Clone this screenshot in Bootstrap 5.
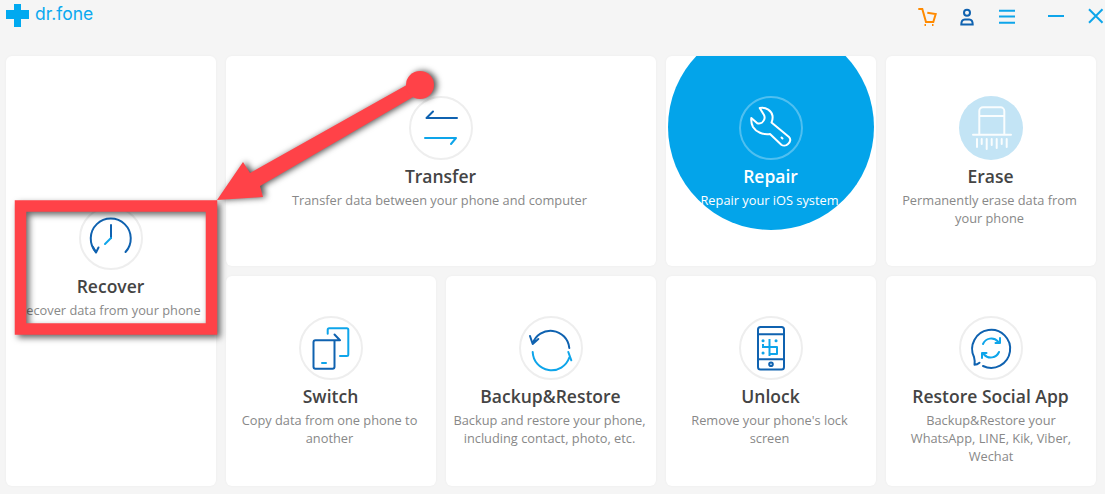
<!DOCTYPE html>
<html lang="en">
<head>
    <meta charset="UTF-8">
    <meta name="viewport" content="width=device-width, initial-scale=1.0">
    <title>dr.fone</title>
    <link href="https://cdn.jsdelivr.net/npm/bootstrap@5.3.3/dist/css/bootstrap.min.css" rel="stylesheet">
    <style>
        body {
            background: #f5f5f5;
            font-family: "Open Sans", "Noto Sans", sans-serif;
            height: 494px;
            overflow: hidden;
            position: relative;
        }
        .top-bar { height: 56px; padding: 8px 1px 0 6px; }
        .top-bar svg { overflow: visible; fill: none; stroke-width: 2; }
        .brand-wrap { margin-top: -4px; }
        .logo-text {
            font-family: Inter, sans-serif;
            font-size: 17.5px;
            line-height: 23px;
            color: #0aa9f0;
            margin: -4px 0 0 6px;
        }
        .win-tools { gap: 24px; }
        .win-min { margin-left: 9px; }
        .tool-grid {
            display: grid;
            grid-template-columns: repeat(5, 210px);
            grid-template-rows: repeat(2, 210px);
            gap: 10px;
            padding-left: 6px;
        }
        .tool-card {
            border-radius: 6px;
            box-shadow: 0 0 3px rgba(0, 0, 0, .04);
            padding: 40px 6px 0;
            overflow: hidden;
            align-items: center;
        }
        .tool-recover { grid-row: span 2; padding-top: 150px; }
        .tool-wide { grid-column: span 2; }
        .tool-active { color: #fff; }
        .tool-active > * { position: relative; }
        .tool-active::before {
            content: "";
            position: absolute;
            left: 2px;
            top: -32px;
            width: 206px;
            height: 206px;
            border-radius: 50%;
            background: #03a4ea;
        }
        .tool-icon {
            width: 64px;
            height: 64px;
            fill: none;
            stroke-width: 2;
            stroke-linecap: round;
            stroke-linejoin: round;
        }
        .tool-name {
            font-family: "Open Sans", sans-serif;
            font-size: 17.5px;
            font-weight: 600;
            line-height: 24px;
            color: #444;
            margin: 4px 1px 3px 0;
        }
        .tool-desc {
            font-size: 12.8px;
            line-height: 18px;
            color: #888;
            margin: 0;
            padding-right: 3px;
        }
        .desc-narrow { max-width: 170px; padding-right: 0; }
        .tool-active .tool-name, .tool-active .tool-desc { color: #fff; }
        .ring { stroke: #eeeeee; }
        .dk { stroke: #0f62b0; }
        .lt { stroke: #0ea5ea; }
        .mark-layer {
            position: absolute;
            left: 0;
            top: 0;
            pointer-events: none;
        }
        .box-shadow { filter: drop-shadow(3px 3px 3px rgba(0, 0, 0, .6)); }
        .arrow-shadow { filter: drop-shadow(3px 0 3px rgba(0, 0, 0, .7)); }
    </style>
</head>
<body>
    <div class="top-bar d-flex align-items-start justify-content-between">
        <div class="brand-wrap d-flex align-items-center">
            <svg width="23" height="23" viewBox="0 0 23 23"><path d="M8 0h7v6h8v9h-8v8H8v-8H0V6h8z" fill="#00a9f0" stroke="none"/></svg>
            <span class="logo-text">dr.fone</span>
        </div>
        <div class="win-tools d-flex">
            <svg width="16" height="16" viewBox="0 0 16 16"><path d="M-.7 1h4L7 14h7.300l2.400-8-8.400-1.300" stroke="#ff8a00"/><path d="M5.500 17h1.500M13 17h1.500" stroke="#ff8a00"/></svg>
            <svg width="16" height="16" viewBox="0 0 16 16"><circle cx="8" cy="4.700" r="3" stroke="#0f62b0"/><path d="M2.300 16.500c0-3 1.500-5 3.500-5h4.400c2 0 3.500 2 3.500 5z" stroke="#0f62b0"/></svg>
            <svg width="16" height="16" viewBox="0 0 16 16"><path d="M0 2.700h16M0 8.500h16M0 14.700h16" stroke="#0ea5ea"/></svg>
            <svg class="win-min" width="16" height="16" viewBox="0 0 16 16"><path d="M0 8h16" stroke="#0ea5ea"/></svg>
            <svg width="16" height="16" viewBox="0 0 16 16"><path d="M1 1.300l13.500 13.500M14.500 1.300L1 14.800" stroke="#0ea5ea"/></svg>
        </div>
    </div>

    <div class="tool-grid">
        <div class="card border-0 text-center tool-card tool-recover">
            <svg class="tool-icon" viewBox="0 0 64 64">
                <circle class="ring" cx="32" cy="32" r="31"/>
                <path class="dk" d="M17 46A20 20 0 1 1 46.500 46"/>
                <path class="dk" d="M14 41l3 5.500 2.500-5"/>
                <path class="dk" d="M32 19v13"/>
                <path class="lt" d="M32 32l-6 6"/>
            </svg>
            <div class="tool-name">Recover</div>
            <p class="tool-desc">Recover data from your phone</p>
        </div>
        <div class="card border-0 text-center tool-card tool-wide">
            <svg class="tool-icon" viewBox="0 0 64 64">
                <circle class="ring" cx="32" cy="32" r="31"/>
                <path class="dk" d="M48 22H17.500L24 15.500"/>
                <path class="lt" d="M16 42h31l-5 6"/>
            </svg>
            <div class="tool-name">Transfer</div>
            <p class="tool-desc">Transfer data between your phone and computer</p>
        </div>
        <div class="card border-0 text-center tool-card tool-active">
            <svg class="tool-icon" viewBox="0 0 64 64">
                <circle cx="32" cy="32" r="31" stroke="#fff" stroke-opacity=".3"/>
                <path stroke="#fff" d="M20.700 12C27 10.500 33 15 33.500 20 34 23 33 25 32.500 26.500L50 41C52 43 51.500 46 49 48 47 50 44 50 42.300 48.700L31 38C24 39 17 36 14 31 12.500 28 12 25 12.300 22L18.300 27.300C21 28 24 26.500 25 24 26 22 25.500 20 25 19Z"/>
                <path stroke="#fff" d="M42.500 41.500l1 1"/>
            </svg>
            <div class="tool-name">Repair</div>
            <p class="tool-desc">Repair your iOS system</p>
        </div>
        <div class="card border-0 text-center tool-card">
            <svg class="tool-icon" viewBox="0 0 64 64">
                <circle cx="32" cy="32" r="32" fill="#c3e4f5"/>
                <path stroke="#fff" stroke-opacity=".9" d="M20.300 38V15c0-2 1.500-3.700 3.700-3.700h17.500c2 0 3.800 1.700 3.800 3.700v23M20.300 20h25M14 38.700h38M18 43v8M22.700 43v5M27.700 43v10M32.700 43v6M37.700 43v9M42.700 43v5M47.700 43v8"/>
            </svg>
            <div class="tool-name">Erase</div>
            <p class="tool-desc">Permanently erase data from your phone</p>
        </div>
        <div class="card border-0 text-center tool-card">
            <svg class="tool-icon" viewBox="0 0 64 64">
                <circle class="ring" cx="32" cy="32" r="31"/>
                <path class="lt" d="M28.700 17.700v-4a1.500 1.500 0 0 1 1.500-1.500h17.600a1.500 1.500 0 0 1 1.500 1.500v24.800a1.500 1.500 0 0 1-1.500 1.500H41"/>
                <path class="dk" d="M41 24.300H16.500a2 2 0 0 0-2 2v24.500a2 2 0 0 0 2 2h17a2 2 0 0 0 2-2V24.500M35.500 18.500l5.500 5.800"/>
                <path class="lt" d="M23 47h4"/>
            </svg>
            <div class="tool-name">Switch</div>
            <p class="tool-desc">Copy data from one phone to another</p>
        </div>
        <div class="card border-0 text-center tool-card">
            <svg class="tool-icon" viewBox="0 0 64 64">
                <circle class="ring" cx="32" cy="32" r="31"/>
                <path class="dk" d="M13.700 27.700A18.800 18.800 0 0 1 50.300 32M11 20l2.700 8 5.600-5"/>
                <path class="lt" d="M13.700 36A18.800 18.800 0 0 0 50.300 41.500M49.300 36l3 8.300"/>
            </svg>
            <div class="tool-name">Backup&amp;Restore</div>
            <p class="tool-desc">Backup and restore your phone, including contact, photo, etc.</p>
        </div>
        <div class="card border-0 text-center tool-card">
            <svg class="tool-icon" viewBox="0 0 64 64">
                <circle class="ring" cx="32" cy="32" r="31"/>
                <rect class="dk" x="19" y="11" width="26" height="42.500" rx="2.500"/>
                <path class="dk" d="M19 18.300h26M19 43.300h26"/>
                <circle class="dk" cx="32" cy="48.300" r="1.800"/>
                <path class="lt" d="M24 24.700h.1M37 24.700h.1M24 37h.1" stroke-width="3"/>
                <path class="lt" d="M30.500 23v17M24 28v4M24 31h6.500M30.500 31H38v7h-7.500" stroke-linecap="butt"/>
            </svg>
            <div class="tool-name">Unlock</div>
            <p class="tool-desc">Remove your phone's lock screen</p>
        </div>
        <div class="card border-0 text-center tool-card">
            <svg class="tool-icon" viewBox="0 0 64 64">
                <circle class="ring" cx="32" cy="32" r="31"/>
                <path class="dk" d="M24 50A19 19 0 1 0 15 41c.8 3 1 5.500.5 7.700 1.500 0 3.500-.7 5-2"/>
                <path class="lt" d="M24 28a9 9 0 0 1 15-2.500l1.500 1.500M40 36a9 9 0 0 1-15 2.500L23.500 37M41 22v5h-4.500M23 42v-5h4.500"/>
            </svg>
            <div class="tool-name">Restore Social App</div>
            <p class="tool-desc desc-narrow">Backup&amp;Restore your WhatsApp, LINE, Kik, Viber, Wechat</p>
        </div>
    </div>

    <!-- annotation on top of the screenshot -->
    <svg class="mark-layer" width="1105" height="494" viewBox="0 0 1105 494">
        <g class="box-shadow">
            <rect x="20.500" y="206" width="191" height="123" fill="none" stroke="#ff4248" stroke-width="11.500"/>
        </g>
        <g class="arrow-shadow">
            <path d="M406.700 85L250 173 243 162 217 200 263 197 260 186 413 97z" fill="#ff4248"/>
            <circle cx="420" cy="85" r="14" fill="#ff4248"/>
        </g>
    </svg>

    <script src="https://cdn.jsdelivr.net/npm/bootstrap@5.3.3/dist/js/bootstrap.bundle.min.js"></script>
</body>
</html>
